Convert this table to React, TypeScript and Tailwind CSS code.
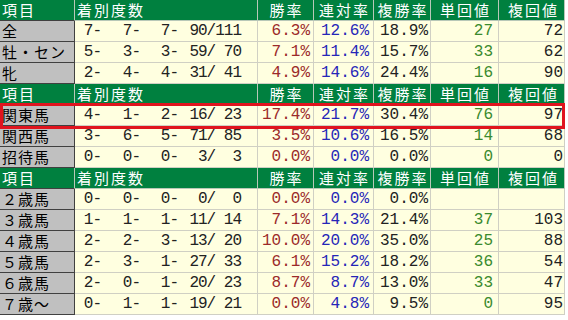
type Row = {
  label: string;
  n: [number, number, number];
  a: number;
  b: number;
  win: string;
  ren: string;
  fuku: string;
  tan: string;
  fukuKai: string;
};

const sections: Row[][] = [
  [
    { label: "全", n: [7, 7, 7], a: 90, b: 111, win: "6.3%", ren: "12.6%", fuku: "18.9%", tan: "27", fukuKai: "72" },
    { label: "牡・セン", n: [5, 3, 3], a: 59, b: 70, win: "7.1%", ren: "11.4%", fuku: "15.7%", tan: "33", fukuKai: "62" },
    { label: "牝", n: [2, 4, 4], a: 31, b: 41, win: "4.9%", ren: "14.6%", fuku: "24.4%", tan: "16", fukuKai: "90" },
  ],
  [
    { label: "関東馬", n: [4, 1, 2], a: 16, b: 23, win: "17.4%", ren: "21.7%", fuku: "30.4%", tan: "76", fukuKai: "97" },
    { label: "関西馬", n: [3, 6, 5], a: 71, b: 85, win: "3.5%", ren: "10.6%", fuku: "16.5%", tan: "14", fukuKai: "68" },
    { label: "招待馬", n: [0, 0, 0], a: 3, b: 3, win: "0.0%", ren: "0.0%", fuku: "0.0%", tan: "0", fukuKai: "0" },
  ],
  [
    { label: "２歳馬", n: [0, 0, 0], a: 0, b: 0, win: "0.0%", ren: "0.0%", fuku: "0.0%", tan: "", fukuKai: "" },
    { label: "３歳馬", n: [1, 1, 1], a: 11, b: 14, win: "7.1%", ren: "14.3%", fuku: "21.4%", tan: "37", fukuKai: "103" },
    { label: "４歳馬", n: [2, 2, 3], a: 13, b: 20, win: "10.0%", ren: "20.0%", fuku: "35.0%", tan: "25", fukuKai: "88" },
    { label: "５歳馬", n: [2, 3, 1], a: 27, b: 33, win: "6.1%", ren: "15.2%", fuku: "18.2%", tan: "36", fukuKai: "54" },
    { label: "６歳馬", n: [2, 0, 1], a: 20, b: 23, win: "8.7%", ren: "8.7%", fuku: "13.0%", tan: "33", fukuKai: "47" },
    { label: "７歳～", n: [0, 1, 1], a: 19, b: 21, win: "0.0%", ren: "4.8%", fuku: "9.5%", tan: "0", fukuKai: "95" },
  ],
];

const pad = (v: number, len: number) => String(v).padStart(len, " ");

const HeaderRow = () => (
  <div className="flex h-[21px] overflow-hidden font-['Noto_Sans_CJK_JP',sans-serif] text-[15px] leading-[20px] tracking-[2px] text-white">
    <div className="w-[75px] overflow-hidden border-r border-b border-r-[#b8c8b8] border-b-[#404040] bg-[#00803f] pl-[2px]">項目</div>
    <div className="w-[183px] overflow-hidden border-r border-b border-r-[#b8c8b8] border-b-[#b8c8b8] bg-[#00803f] pl-[2px]">着別度数</div>
    <div className="w-[56px] overflow-hidden border-r border-b border-r-[#b8c8b8] border-b-[#b8c8b8] bg-[#00803f] pl-[2px] text-center">勝率</div>
    <div className="w-[60px] overflow-hidden border-r border-b border-r-[#b8c8b8] border-b-[#b8c8b8] bg-[#00803f] pl-[2px] text-center">連対率</div>
    <div className="w-[57px] overflow-hidden border-r border-b border-r-[#b8c8b8] border-b-[#b8c8b8] bg-[#00803f] pl-[2px] text-center">複勝率</div>
    <div className="w-[68px] overflow-hidden border-r border-b border-r-[#b8c8b8] border-b-[#b8c8b8] bg-[#00803f] pl-[2px] text-center">単回値</div>
    <div className="w-[66px] overflow-hidden border-r border-b border-r-[#b8c8b8] border-b-[#b8c8b8] bg-[#00803f] pl-[4px] text-center">複回値</div>
  </div>
);

const DataRow = ({ r }: { r: Row }) => (
  <div className="flex h-[21px] overflow-hidden text-[16px] leading-[20px]">
    <div className="w-[75px] overflow-hidden border-r border-b border-[#404040] bg-[#c0c0c0] pl-[2px] font-['Noto_Sans_CJK_JP',sans-serif] text-[15px] tracking-[1px] text-black">
      {r.label}
    </div>
    <div className="flex w-[183px] border-r border-b border-[#d0d0c4] bg-[#ffffe0] font-['Liberation_Mono',monospace] tracking-[-1px] whitespace-pre text-[#222]">
      <span className="w-[26px] text-right">{r.n[0]}-</span>
      <span className="w-[39px] text-right">{r.n[1]}-</span>
      <span className="w-[38px] text-right">{r.n[2]}-</span>
      <span className="w-[63px] text-right">{`${pad(r.a, 2)}/${pad(r.b, 3)}`}</span>
    </div>
    <div className="w-[56px] border-r border-b border-[#d0d0c4] bg-[#ffffe0] pr-[3px] text-right font-['Liberation_Mono',monospace] text-[#9b2a2a]">
      {r.win}
    </div>
    <div className="w-[60px] border-r border-b border-[#d0d0c4] bg-[#ffffe0] pr-[4px] text-right font-['Liberation_Mono',monospace] text-[#2626b8]">
      {r.ren}
    </div>
    <div className="w-[57px] border-r border-b border-[#d0d0c4] bg-[#ffffe0] pr-[2px] text-right font-['Liberation_Mono',monospace] text-[#222]">
      {r.fuku}
    </div>
    <div className="w-[68px] border-r border-b border-[#d0d0c4] bg-[#ffffe0] pr-[5px] text-right font-['Liberation_Mono',monospace] text-[#3a8a2e]">
      {r.tan}
    </div>
    <div className="w-[66px] border-r border-b border-[#d0d0c4] bg-[#ffffe0] pr-[1px] text-right font-['Liberation_Mono',monospace] text-[#222]">
      {r.fukuKai}
    </div>
  </div>
);

export default function App() {
  return (
    <div className="h-[320px] w-[568px] overflow-hidden bg-white">
      <div className="relative w-[565px]">
        {sections.map((rows, i) => (
          <div key={i}>
            <HeaderRow />
            {rows.map((r) => (
              <DataRow key={r.label} r={r} />
            ))}
          </div>
        ))}
        {/* highlight */}
        <div className="absolute top-[103px] left-0 h-[26px] w-[565px] border-[3px] border-[#e0141e]" />
      </div>
    </div>
  );
}
